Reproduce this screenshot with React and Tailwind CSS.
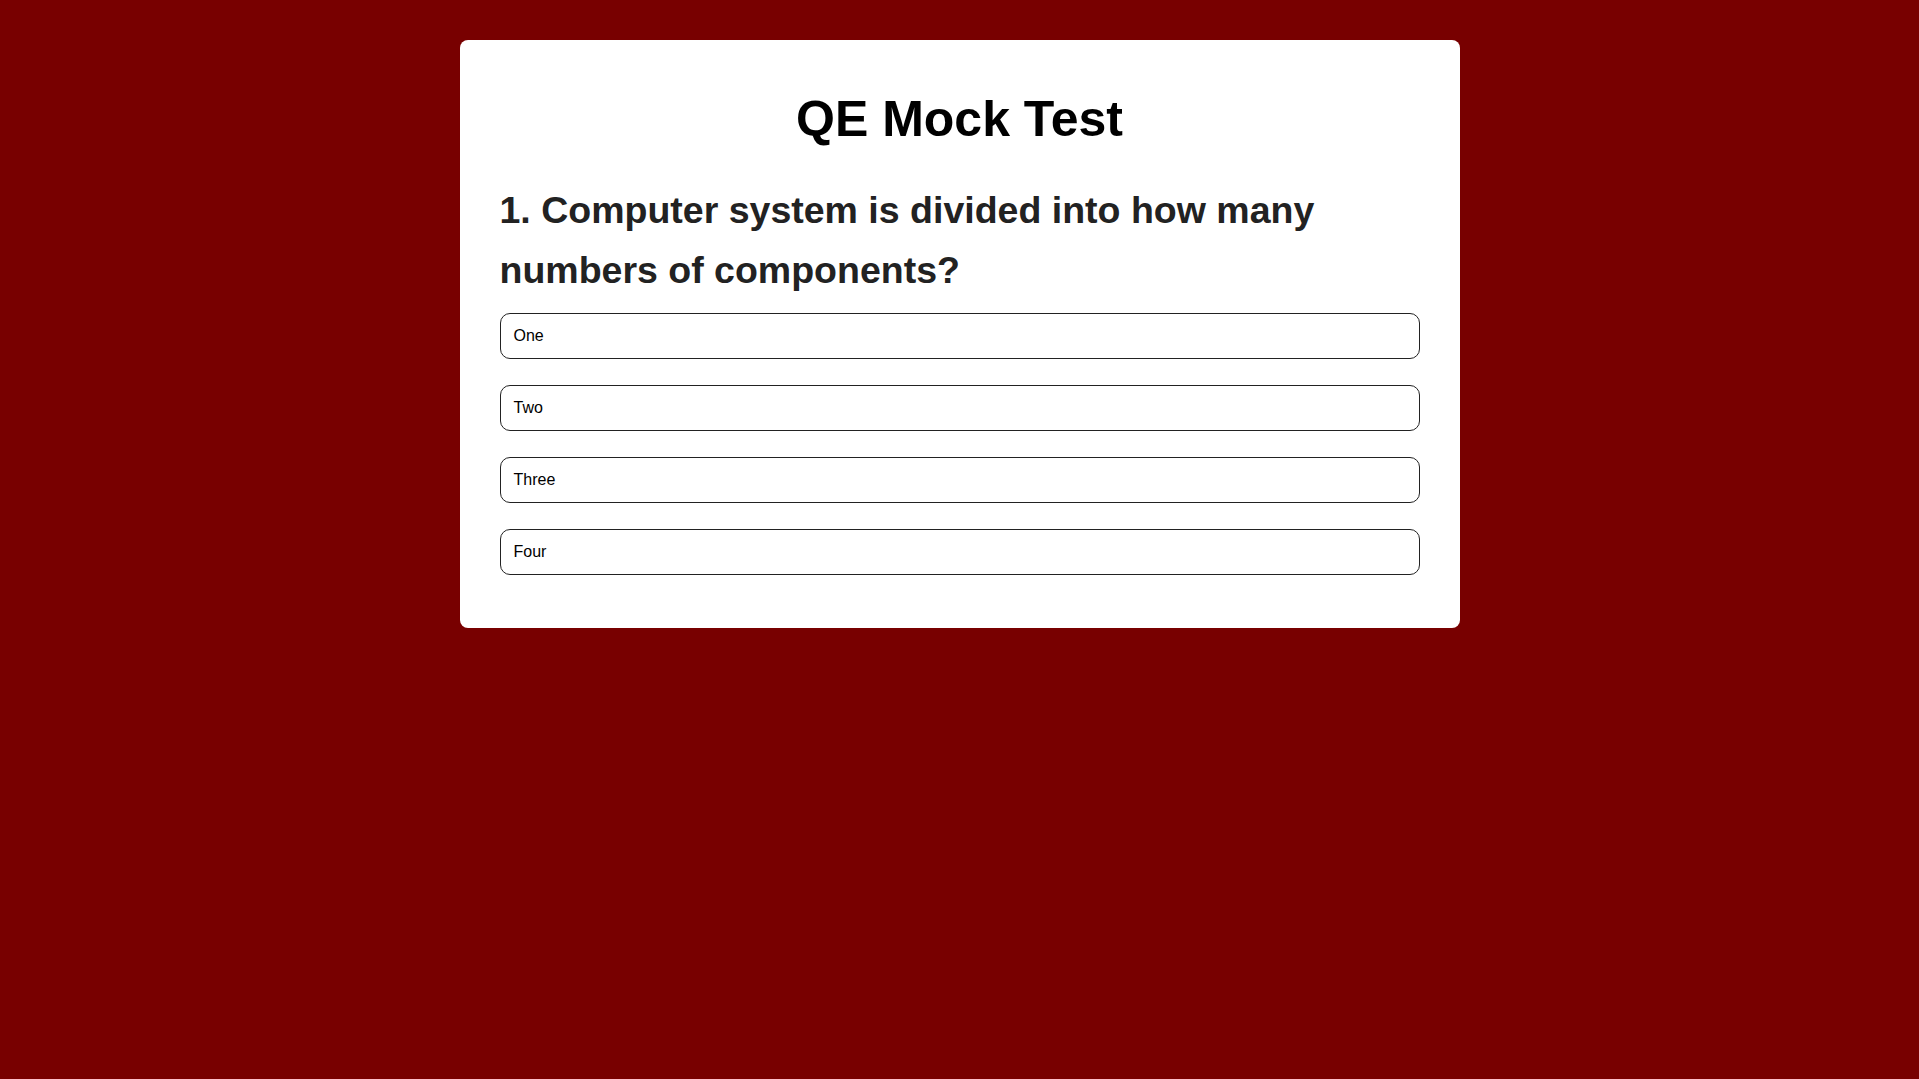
import React from "react";

const options = ["One", "Two", "Three", "Four"];

export default function App() {
  return (
    <div className="min-h-screen bg-[#780000] pt-10 font-['Liberation_Sans',Arial,sans-serif]">
      <div className="w-[1000px] mx-auto bg-white rounded-lg px-10 pt-[52px] pb-[53px]">
        <h1 className="text-[50px] leading-[55px] font-bold text-center text-black">QE Mock Test</h1>
        <h2 className="mt-[33px] text-[37.5px] leading-[60px] font-bold text-[#222]">
          1. Computer system is divided into how many numbers of components?
        </h2>
        <div className="mt-[13px] flex flex-col gap-[26px]">
          {options.map((opt) => (
            <div
              key={opt}
              className="h-[46px] border border-[#222] rounded-[10px] px-[13px] flex items-center text-base text-black"
            >
              {opt}
            </div>
          ))}
        </div>
      </div>
    </div>
  );
}
